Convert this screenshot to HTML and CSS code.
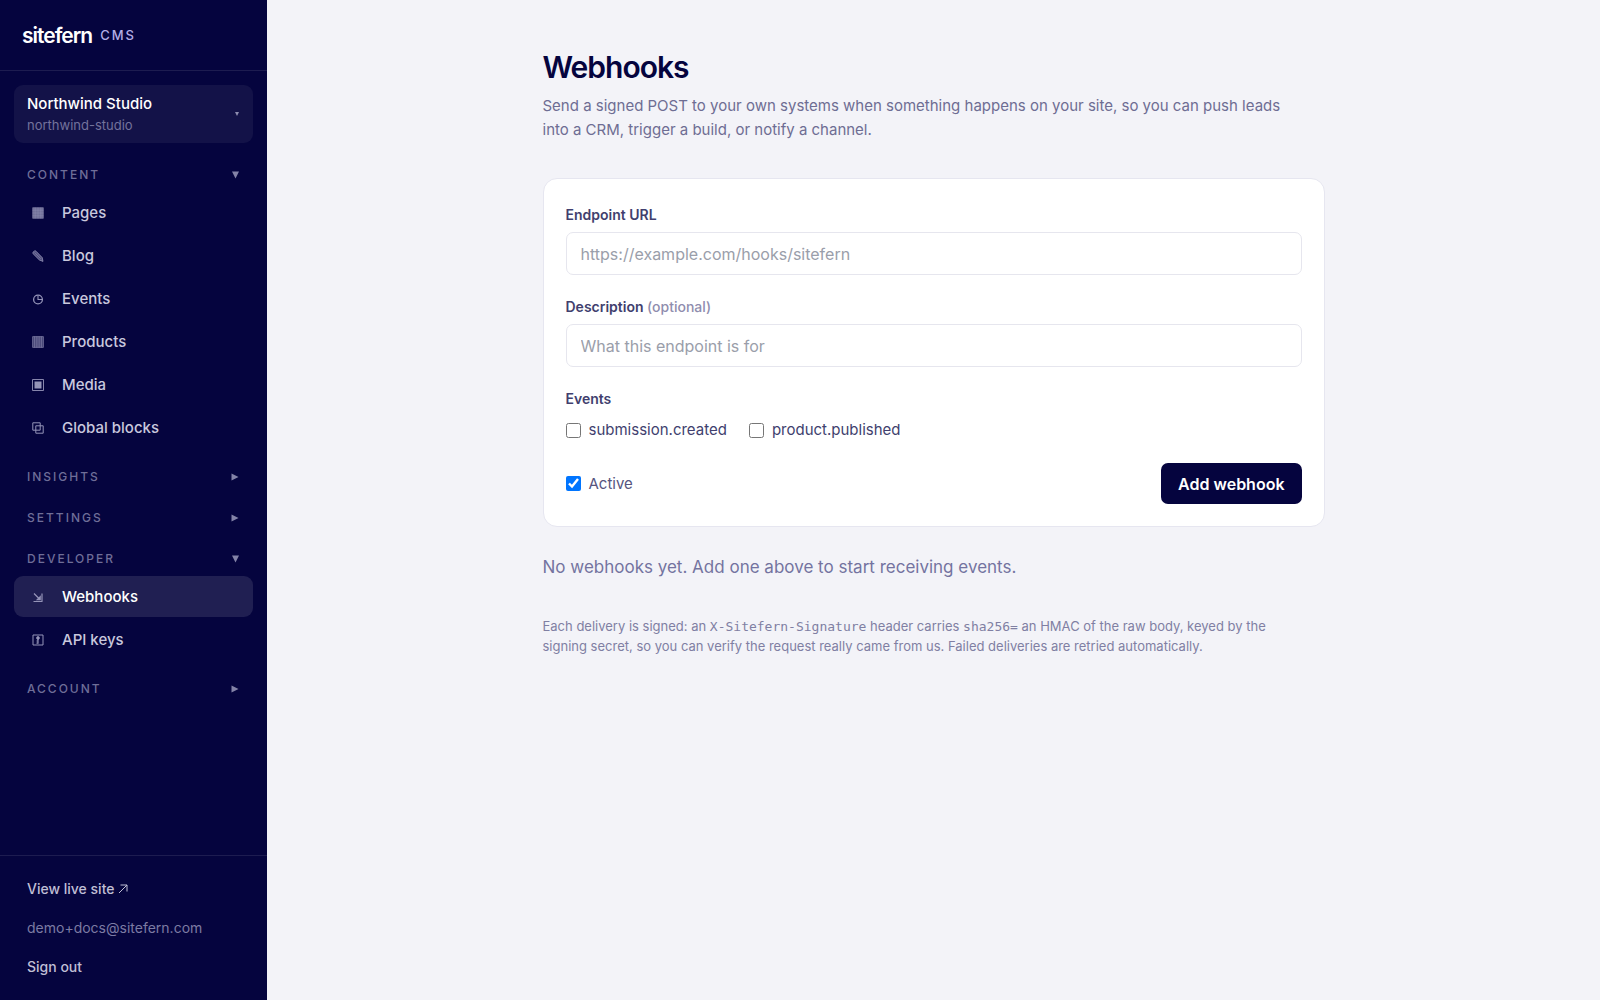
FILE: index.html
```html
<!DOCTYPE html>
<html lang="en">
<head>
<meta charset="utf-8">
<meta name="viewport" content="width=device-width, initial-scale=1">
<title>Webhooks · sitefern CMS</title>
<link rel="stylesheet" href="styles.css">
</head>
<body>
<div class="app">
  <aside class="sidebar">
    <div class="brand"><span class="brand-name">sitefern</span><span class="brand-tag">CMS</span></div>
    <nav class="nav">
      <button class="switcher" type="button">
        <span class="switcher-text"><span class="switcher-name">Northwind Studio</span><span class="switcher-slug">northwind-studio</span></span>
        <svg class="switcher-caret" viewBox="0 0 4 4"><path d="M0 0h4L2 4z"/></svg>
      </button>

      <section class="group">
        <button class="group-head" type="button">Content<svg class="caret" viewBox="0 0 8 8"><path d="M1 .5h7L4.500 7.500z"/></svg></button>
        <ul class="items">
          <li><a class="item" href="#"><svg class="icon" viewBox="0 0 12 12"><path d="M.5 .5h11v11H.5z" fill="currentColor" fill-opacity=".75" stroke="none"/><path d="M.7 .7h10.600v10.600H.7zM3.200 .5v11M6 .5v11M8.800 .5v11M.5 3.200h11M.5 6h11M.5 8.800h11" stroke-width=".4"/></svg>Pages</a></li>
          <li><a class="item" href="#"><svg class="icon" viewBox="0 0 12 12"><path d="M1 2.200L2.600 .9Q3.300 .5 4 1.200L10.200 7.600L11 11.400L7.400 10L1.200 3.800Q.5 2.900 1 2.200z" fill="currentColor" fill-opacity=".55" stroke-width=".8"/><path d="M2.500 2.400l6.300 6.400" stroke-width=".5"/></svg>Blog</a></li>
          <li><a class="item" href="#"><svg class="icon" viewBox="0 0 12 12"><circle cx="6" cy="6.500" r="4.400" stroke-width="1.300"/><path d="M6 2.500v4h4" stroke-width="1.100"/></svg>Events</a></li>
          <li><a class="item" href="#"><svg class="icon" viewBox="0 0 12 12"><path d="M.6 .6h10.800v10.800H.6z" fill="currentColor" fill-opacity=".45" stroke-width=".6"/><path d="M2.700 .5v11M4.900 .5v11M7.100 .5v11M9.300 .5v11" stroke-width=".6"/></svg>Products</a></li>
          <li><a class="item" href="#"><svg class="icon" viewBox="0 0 12 12"><path d="M.5 .5h11v11H.5z" stroke-width=".9"/><path d="M2.500 2.500h7v7h-7z" fill="currentColor" stroke="none"/></svg>Media</a></li>
          <li><a class="item" href="#"><svg class="icon" viewBox="0 0 12 12"><path d="M.8 .8h7.400v7.400H.8zM3.800 3.800h7.400v7.400H3.800z" stroke-width="1"/></svg>Global blocks</a></li>
        </ul>
      </section>

      <section class="group">
        <button class="group-head" type="button">Insights<svg class="caret" viewBox="0 0 8 8"><path d="M.5 .5v7L7.500 4z"/></svg></button>
      </section>
      <section class="group">
        <button class="group-head" type="button">Settings<svg class="caret" viewBox="0 0 8 8"><path d="M.5 .5v7L7.500 4z"/></svg></button>
      </section>
      <section class="group">
        <button class="group-head" type="button">Developer<svg class="caret" viewBox="0 0 8 8"><path d="M1 .5h7L4.500 7.500z"/></svg></button>
        <ul class="items">
          <li><a class="item item-active" href="#" aria-current="page"><svg class="icon" viewBox="0 0 12 12"><path d="M2 2.500l5.500 5.500M10 2.500v8M1.500 10.500h9" stroke-width="1.200"/><path d="M8.800 4.200v5H3.800z" fill="currentColor" stroke="none"/></svg>Webhooks</a></li>
          <li><a class="item" href="#"><svg class="icon" viewBox="0 0 12 12"><path d="M1 1h10v10H1z" stroke-width="1"/><circle cx="6" cy="4" r="1.400" fill="currentColor" stroke-width=".8"/><path d="M6 4.500v5.300M4.500 7h1.500M4.500 9.200h1.500" stroke-width="1.200"/></svg>API keys</a></li>
        </ul>
      </section>
      <section class="group">
        <button class="group-head" type="button">Account<svg class="caret" viewBox="0 0 8 8"><path d="M.5 .5v7L7.500 4z"/></svg></button>
      </section>
    </nav>
    <footer class="side-foot">
      <a class="foot-link" href="#">View live site <svg class="arrow" viewBox="0 0 10 10"><path d="M1 9l8-8M2.500 1H9v6.500"/></svg></a>
      <span class="foot-mail">demo+docs@sitefern.com</span>
      <button class="foot-link" type="button">Sign out</button>
    </footer>
  </aside>

  <main class="main">
    <div class="content">
      <h1 class="title">Webhooks</h1>
      <p class="lead">Send a signed POST to your own systems when something happens on your site, so you can push leads into a CRM, trigger a build, or notify a channel.</p>

      <form class="card">
        <div class="field">
          <label class="label" for="url">Endpoint URL</label>
          <input class="input" id="url" type="url" placeholder="https://example.com/hooks/sitefern">
        </div>
        <div class="field">
          <label class="label" for="desc">Description <span class="optional">(optional)</span></label>
          <input class="input" id="desc" type="text" placeholder="What this endpoint is for">
        </div>
        <fieldset class="events">
          <legend class="label">Events</legend>
          <div class="checks">
            <label class="check"><input class="box" type="checkbox">submission.created</label>
            <label class="check"><input class="box" type="checkbox">product.published</label>
          </div>
        </fieldset>
        <div class="actions">
          <label class="check check-soft"><input class="box" type="checkbox" checked>Active</label>
          <button class="submit" type="button">Add webhook</button>
        </div>
      </form>

      <p class="empty">No webhooks yet. Add one above to start receiving events.</p>
      <p class="note">Each delivery is signed: an <code class="code">X-Sitefern-Signature</code> header carries <code class="code">sha256=</code> an HMAC of the raw body, keyed by the signing secret, so you can verify the request really came from us. Failed deliveries are retried automatically.</p>
    </div>
  </main>
</div>
</body>
</html>
```
FILE: styles.css
```css
* { box-sizing: border-box; }

body {
  margin: 0;
  background: #f3f3f8;
  color: #05043e;
  font-family: "Inter", "Liberation Sans", sans-serif;
  font-size: 16px;
}

button, input { font: inherit; }
button { border: 0; background: none; cursor: pointer; }
a { color: inherit; text-decoration: none; }

.app { display: flex; min-height: 100vh; }

.sidebar {
  display: flex;
  flex-direction: column;
  flex: 0 0 267px;
  background: #05043e;
  color: #c9c8dd;
}

.brand {
  display: flex;
  align-items: center;
  gap: 8px;
  height: 71px;
  padding: 0 22px;
  border-bottom: 1px solid #1d1c50;
}
.brand-name { color: #fff; font-size: 21px; font-weight: 600; letter-spacing: -1px; }
.brand-tag { color: #b3aee6; font-size: 13px; font-weight: 500; letter-spacing: 2px; }

.nav { flex: 1; padding: 14px 14px 0; }

.switcher {
  display: flex;
  align-items: center;
  justify-content: space-between;
  width: 100%;
  height: 58px;
  margin-bottom: 17px;
  padding: 0 14px 0 13px;
  border-radius: 9px;
  background: #131248;
  text-align: left;
}
.switcher-text { display: flex; flex-direction: column; }
.switcher-name { color: #fff; font-size: 15px; font-weight: 500; line-height: 22px; }
.switcher-slug { color: #74739c; font-size: 13px; line-height: 20px; }
.switcher-caret { width: 4px; height: 4px; fill: #8e8db0; }

.group { margin-bottom: 12px; }
.group-head {
  display: flex;
  align-items: center;
  justify-content: space-between;
  width: 100%;
  height: 29px;
  padding: 0 14px 0 13px;
  color: #6f6e98;
  font-size: 12px;
  font-weight: 500;
  letter-spacing: 2px;
  text-transform: uppercase;
}
.caret { width: 8px; height: 8px; fill: #8483a8; }

.items {
  display: grid;
  gap: 2px;
  margin: 0;
  padding: 3px 0 2px;
  list-style: none;
}
.item {
  display: flex;
  align-items: center;
  gap: 18px;
  height: 41px;
  padding: 0 18px;
  border-radius: 9px;
  font-size: 15px;
  font-weight: 500;
}
.item-active { background: #201f52; color: #fff; }
.icon {
  width: 12px;
  height: 12px;
  fill: none;
  stroke: currentColor;
  color: #9594b8;
}

.side-foot {
  display: flex;
  flex-direction: column;
  align-items: flex-start;
  gap: 17px;
  padding: 22px 27px;
  border-top: 1px solid #1d1c50;
}
.foot-link { padding: 0; color: #c0bfd5; font-size: 14px; font-weight: 500; line-height: 22px; }
.foot-mail { color: #7c7ba3; font-size: 14px; line-height: 22px; }
.arrow { width: 10px; height: 10px; fill: none; stroke: currentColor; stroke-width: 1px; }

.main { flex: 1; min-width: 0; padding: 48px 32px; }
.content { max-width: 782px; margin: 0 auto; }

.title { margin: 0; font-size: 30px; font-weight: 600; line-height: 38px; letter-spacing: -1px; }
.lead { max-width: 760px; margin: 8px 0 36px; color: #6e6d93; font-size: 15px; line-height: 24px; }

.card {
  display: grid;
  gap: 21px;
  padding: 25px 22px 22px;
  border: 1px solid #e6e6f0;
  border-radius: 14px;
  background: #fff;
}
.field { display: grid; gap: 6px; }
.label { padding: 0; color: #413f6e; font-size: 14px; font-weight: 600; line-height: 22px; }
.optional { color: #8f8dae; font-weight: 500; }
.input {
  width: 100%;
  height: 43px;
  padding: 0 14px;
  border: 1px solid #e6e6ee;
  border-radius: 7px;
  background: #fff;
  color: #05043e;
}
.input::placeholder { color: #9a9eaa; }

.events { min-width: 0; margin: 0; padding: 0; border: 0; }
.checks { display: flex; flex-wrap: wrap; gap: 8px 22px; padding-top: 8px; }
.check { display: flex; align-items: center; gap: 8px; color: #413f6e; font-size: 15px; line-height: 24px; }
.check-soft { color: #57557f; }
.box { width: 15px; height: 15px; margin: 0; }

.actions { display: flex; align-items: center; justify-content: space-between; }
.submit {
  height: 41px;
  padding: 0 17px;
  border-radius: 7px;
  background: #05043e;
  color: #fff;
  font-size: 16px;
  font-weight: 600;
}

.empty { margin: 26px 0 35px; color: #7473a0; font-size: 17px; line-height: 28px; }
.note { max-width: 760px; margin: 0; color: #807fa3; font-size: 13px; line-height: 20px; }
.code { font-family: "DejaVu Sans Mono", "Liberation Mono", monospace; font-size: 13px; line-height: 16px; }
```
